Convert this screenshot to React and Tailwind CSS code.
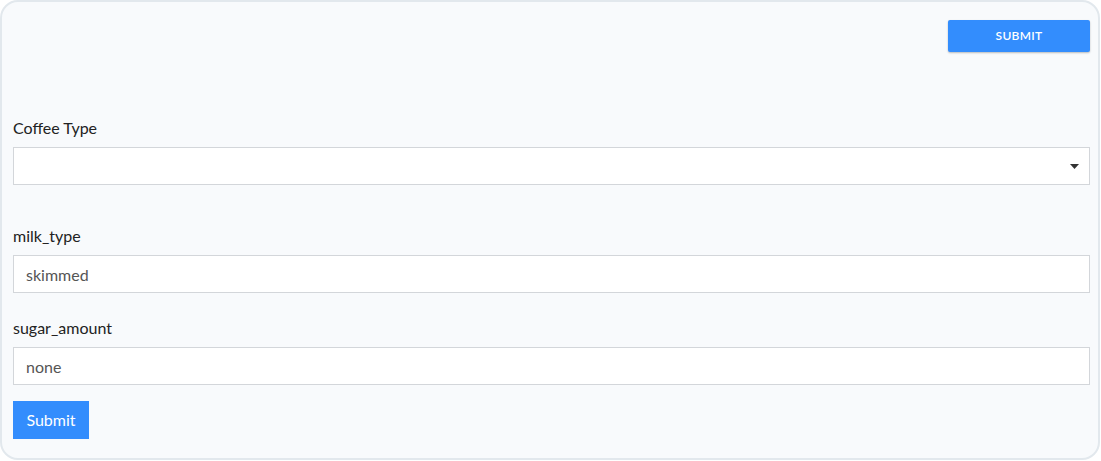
import React, { useState } from "react";

function Field({ label, value, onChange }) {
  return (
    <div>
      <label className="block text-[16px] leading-[20px] text-[#222] mb-[9px]">{label}</label>
      <input
        value={value}
        onChange={(e) => onChange(e.target.value)}
        className="block w-full h-[38px] border border-[#d3d6da] bg-white px-[12px] text-[16px] text-[#555] outline-none"
      />
    </div>
  );
}

export default function App() {
  const [coffee, setCoffee] = useState("");
  const [milk, setMilk] = useState("skimmed");
  const [sugar, setSugar] = useState("none");

  return (
    <div className="w-[1100px] h-[460px] border-2 border-[#e2e8ed] rounded-[18px] bg-[#f8fafc] pl-[11px] pt-[18px]" style={{ fontFamily: "Lato, 'Noto Sans', sans-serif" }}>
      <div className="w-[1077px]">
        <div className="flex justify-end">
          <button className="w-[142px] h-[32px] bg-[#338dfd] text-white text-[12px] font-semibold tracking-[0.3px] rounded-[2px] shadow-[0_1px_2px_rgba(0,0,0,0.25)]">
            SUBMIT
          </button>
        </div>

        {/* Coffee type select */}
        <div className="mt-[66px]">
          <label className="block text-[16px] leading-[20px] text-[#222] mb-[9px]">Coffee Type</label>
          <div className="relative">
            <select
              value={coffee}
              onChange={(e) => setCoffee(e.target.value)}
              className="block w-full h-[38px] border border-[#d3d6da] bg-white px-[12px] text-[16px] text-[#555] outline-none appearance-none"
            >
              <option value=""></option>
              <option value="espresso">espresso</option>
              <option value="latte">latte</option>
            </select>
            <svg className="absolute right-[11px] top-[17px] pointer-events-none" width="9" height="5" viewBox="0 0 9 5">
              <path d="M0 0h9L4.5 5z" fill="#333" />
            </svg>
          </div>
        </div>

        <div className="mt-[41px]">
          <Field label="milk_type" value={milk} onChange={setMilk} />
        </div>
        <div className="mt-[25px]">
          <Field label="sugar_amount" value={sugar} onChange={setSugar} />
        </div>

        <button className="mt-[16px] h-[38px] w-[76px] bg-[#338dfd] text-white text-[16px]">
          Submit
        </button>
      </div>
    </div>
  );
}
